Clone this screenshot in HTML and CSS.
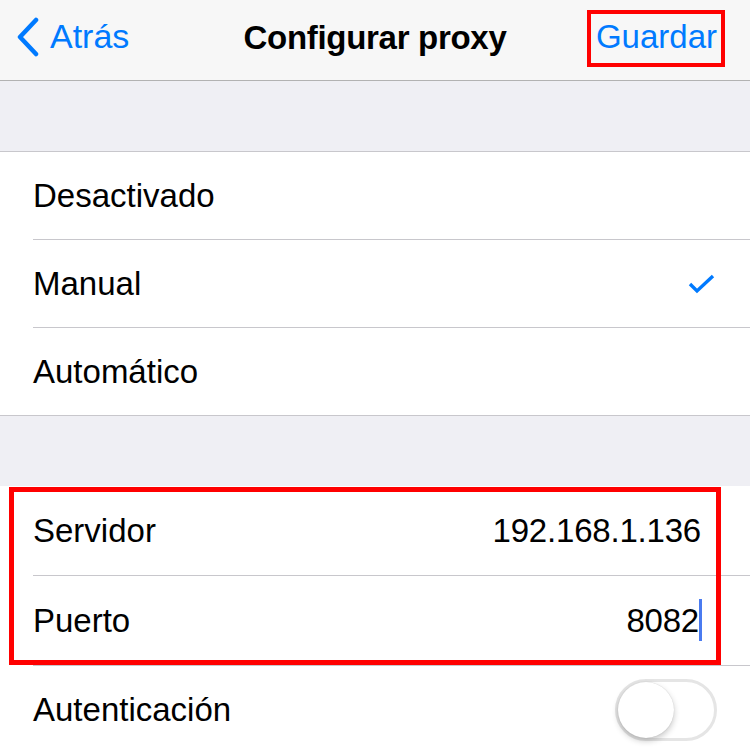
FILE: index.html
```html
<!DOCTYPE html>
<html lang="es">
<head>
<meta charset="utf-8">
<link rel="stylesheet" href="styles.css">
</head>
<body>
<div class="screen">
  <header class="nav">
    <div class="back">
      <svg class="chev" width="24" height="40" viewBox="0 0 24 40"><path d="M20 3 L4 20 L20 37" fill="none" stroke="#007aff" stroke-width="4.5" stroke-linecap="round" stroke-linejoin="round"/></svg>
      <span>Atrás</span>
    </div>
    <div class="title">Configurar proxy</div>
    <div class="save">Guardar</div>
    <div class="mark mark-save"></div>
  </header>
  <div class="spacer"></div>
  <section class="group">
    <div class="row"><span>Desactivado</span></div>
    <div class="row"><span>Manual</span>
      <svg class="check" width="28" height="22" viewBox="0 0 28 22"><path d="M2 11 L9 18 L25 3" fill="none" stroke="#007aff" stroke-width="3.4"/></svg>
    </div>
    <div class="row"><span>Automático</span></div>
  </section>
  <div class="spacer spacer2"></div>
  <section class="group group2">
    <div class="row"><span>Servidor</span><span class="value">192.168.1.136</span></div>
    <div class="row"><span>Puerto</span><span class="value value-edit">8082<i class="cursor"></i></span></div>
    <div class="row"><span>Autenticación</span>
      <div class="toggle"><div class="knob"></div></div>
    </div>
  </section>
  <div class="mark mark-fields"></div>
</div>
</body>
</html>
```
FILE: styles.css
```css
html, body { margin: 0; padding: 0; }
body { width: 750px; height: 754px; overflow: hidden; background: #efeff4; font-family: "Liberation Sans", Arial, sans-serif; color: #000; }
.screen { position: relative; width: 750px; }
.nav { position: relative; height: 80px; background: #f7f7f7; border-bottom: 1px solid #b2b2b2; display: flex; align-items: center; }
.back { position: absolute; left: 16px; top: 17px; display: flex; align-items: center; gap: 10px; color: #007aff; font-size: 34px; }
.back span { margin-top: -1px; }
.title { width: 100%; text-align: center; font-weight: bold; font-size: 33px; letter-spacing: -0.3px; margin-top: -4px; }
.save { position: absolute; right: 33px; top: 18px; color: #007aff; font-size: 33px; }
.mark { position: absolute; border: 5px solid #ff0000; box-sizing: border-box; pointer-events: none; }
.mark-save { left: 587px; top: 10px; width: 138px; height: 57px; border-width: 4px; }
.spacer { height: 70px; background: #efeff4; border-bottom: 1px solid #c8c7cc; }
.spacer2 { height: 70px; border-bottom: none; }
.group { background: #fff; border-bottom: 1px solid #c8c7cc; padding-left: 33px; }
.group2 { border-bottom: none; }
.row { height: 87px; display: flex; align-items: center; justify-content: space-between; font-size: 33px; border-bottom: 1px solid #c8c7cc; padding-right: 34px; }
.row:last-child { border-bottom: none; }
.group2 .row { padding-right: 49px; height: 89px; }
.group2 .row:last-child { height: 88px; }
.value { position: relative; letter-spacing: -0.2px; }
.value-edit { padding-right: 3px; margin-right: -1px; }
.cursor { position: absolute; right: 0; top: -3px; width: 3px; height: 42px; background: #4a7bf0; }
.toggle { position: relative; width: 102px; height: 62px; box-sizing: border-box; border: 3px solid #e5e5e5; border-radius: 31px; margin-right: -16px; background: #fff; }
.knob { position: absolute; left: 0; top: 0; width: 56px; height: 56px; border-radius: 50%; background: #fff; box-shadow: 0 3px 6px rgba(0,0,0,0.22), 0 0 1px rgba(0,0,0,0.2); }
.mark-fields { left: 9px; top: 487px; width: 712px; height: 178px; }
```
